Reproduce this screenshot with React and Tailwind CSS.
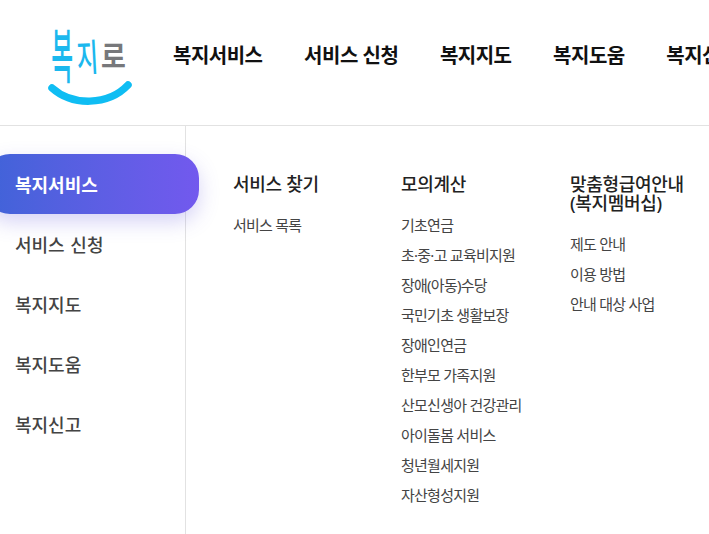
const font = { fontFamily: '"Noto Sans", "Noto Sans CJK KR", sans-serif' }

const topMenu = ['복지서비스', '서비스 신청', '복지지도', '복지도움', '복지신고']
const sideMenu = ['서비스 신청', '복지지도', '복지도움', '복지신고']

const columns = [
  { title: ['서비스 찾기'], width: 'w-[168px]', items: ['서비스 목록'] },
  {
    title: ['모의계산'],
    width: 'w-[169px]',
    items: [
      '기초연금',
      '초·중·고 교육비지원',
      '장애(아동)수당',
      '국민기초 생활보장',
      '장애인연금',
      '한부모 가족지원',
      '산모신생아 건강관리',
      '아이돌봄 서비스',
      '청년월세지원',
      '자산형성지원',
    ],
  },
  {
    title: ['맞춤형급여안내', '(복지멤버십)'],
    width: 'w-[140px]',
    items: ['제도 안내', '이용 방법', '안내 대상 사업'],
  },
]

function Logo() {
  return (
    <div className="relative w-[84px] h-[90px] shrink-0">
      <span className="absolute left-[-2px] top-[14px] text-[35px] leading-[52px] font-medium text-[#1bb8ee] scale-x-[0.68] scale-y-[1.7]">복</span>
      <span className="absolute left-[26px] top-[21px] text-[29px] leading-[40px] font-medium text-[#1bb8ee] scale-x-[0.8] scale-y-[1.3] -rotate-3">지</span>
      <span className="absolute left-[53px] top-[22px] text-[27px] leading-[36px] font-bold text-[#77787b] scale-y-[1.1]">로</span>
      <svg className="absolute left-0 bottom-0" width="84" height="38" viewBox="0 0 84 38">
        <path d="M4 20 C24 38 60 38 80 17" fill="none" stroke="#0fbdf3" strokeWidth="7.5" strokeLinecap="round" />
      </svg>
    </div>
  )
}

export default function App() {
  return (
    <div className="w-[709px] h-[534px] overflow-hidden bg-white" style={font}>
      <header className="h-[126px] border-b border-[#e2e2e2] flex items-center pl-[48px] pb-[3px]">
        <Logo />
        <nav className="flex gap-[41.6px] ml-[41px] whitespace-nowrap -mt-[11px]">
          {topMenu.map((label) => (
            <a key={label} className="text-[20px] leading-[30px] font-bold text-[#111] tracking-[-0.5px]">{label}</a>
          ))}
        </nav>
      </header>
      <div className="flex h-[408px]">
        <aside className="w-[186px] shrink-0 border-r border-[#e2e2e2] pt-[28px]">
          <div className="relative z-10 w-[213px] h-[60px] -ml-[14px] pl-[29px] pt-[2px] flex items-center rounded-[24px] bg-gradient-to-r from-[#3f63d8] to-[#7259ee] shadow-[0_8px_20px_rgba(90,80,220,0.25)]">
            <span className="text-[18px] font-bold text-white">복지서비스</span>
          </div>
          {sideMenu.map((label) => (
            <div key={label} className="h-[60px] pl-[15px] pt-[2px] flex items-center text-[18px] font-medium text-[#444] [word-spacing:1px]">{label}</div>
          ))}
        </aside>
        <main className="flex pl-[47px] pt-[49px]">
          {columns.map((col) => (
            <section key={col.title[0]} className={col.width}>
              <h3 className="text-[18px] leading-[19px] font-medium text-[#222] tracking-[-0.3px] whitespace-nowrap mb-[16px]">
                {col.title.map((line) => <div key={line}>{line}</div>)}
              </h3>
              <ul>
                {col.items.map((item) => (
                  <li key={item} className="h-[30px] flex items-center text-[15px] text-[#444] tracking-[-0.75px] whitespace-nowrap">{item}</li>
                ))}
              </ul>
            </section>
          ))}
        </main>
      </div>
    </div>
  )
}
